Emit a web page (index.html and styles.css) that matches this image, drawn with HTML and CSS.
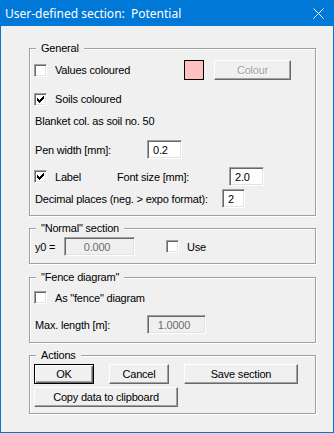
FILE: index.html
```html
<!DOCTYPE html>
<html lang="en">
<head>
    <meta charset="UTF-8">
    <title>User-defined section: Potential</title>
    <link rel="stylesheet" href="styles.css">
</head>
<body>
    <div class="window">
        <div class="titlebar">
            <span class="title">User-defined section:  Potential</span>
            <svg class="close" width="11" height="11" viewBox="0 0 11 11">
                <path d="M0.5 0.5L10.5 10.5M10.5 0.5L0.5 10.5" stroke="#fff" stroke-width="1"/>
            </svg>
        </div>

        <div class="client">
            <div class="group group-general">
                <div class="group-title">General</div>
                <div class="row row-values">
                    <label class="check w-values"><span class="box"></span>Values coloured</label>
                    <span class="swatch"></span>
                    <button class="btn btn-colour" disabled>Colour</button>
                </div>
                <div class="row row-soils">
                    <label class="check"><span class="box"><svg width="11" height="11" viewBox="0 0 11 11"><path d="M2 4h1v3h-1zM3 5h1v3h-1zM4 6h1v3h-1zM5 5h1v3h-1zM6 4h1v3h-1zM7 3h1v3h-1zM8 2h1v3h-1z"/></svg></span>Soils coloured</label>
                </div>
                <div class="row row-blanket">
                    <span class="text">Blanket col. as soil no. 50</span>
                </div>
                <div class="row row-pen">
                    <span class="text lbl-pen">Pen width [mm]:</span>
                    <input class="field w-pen" type="text" value="0.2">
                </div>
                <div class="row row-label">
                    <label class="check w-label"><span class="box"><svg width="11" height="11" viewBox="0 0 11 11"><path d="M2 4h1v3h-1zM3 5h1v3h-1zM4 6h1v3h-1zM5 5h1v3h-1zM6 4h1v3h-1zM7 3h1v3h-1zM8 2h1v3h-1z"/></svg></span>Label</label>
                    <span class="lbl-font">Font size [mm]:</span>
                    <input class="field w-font" type="text" value="2.0">
                </div>
                <div class="row row-decimal">
                    <span class="text lbl-decimal">Decimal places (neg. &gt; expo format):</span>
                    <input class="field w-dec" type="text" value="2">
                </div>
            </div>

            <div class="group group-normal">
                <div class="group-title">"Normal" section</div>
                <div class="row row-y0">
                    <span class="text lbl-y0">y0 =</span>
                    <input class="field w-y0" type="text" value="0.000" disabled>
                    <label class="check use"><span class="box"></span>Use</label>
                </div>
            </div>

            <div class="group group-fence">
                <div class="group-title">"Fence diagram"</div>
                <div class="row row-fence">
                    <label class="check"><span class="box"></span>As "fence" diagram</label>
                </div>
                <div class="row row-max">
                    <span class="text lbl-max">Max. length [m]:</span>
                    <input class="field w-max" type="text" value="1.0000" disabled>
                </div>
            </div>

            <div class="group group-actions">
                <div class="group-title">Actions</div>
                <div class="row row-buttons">
                    <button class="btn btn-default w-ok">OK</button>
                    <button class="btn w-cancel">Cancel</button>
                    <button class="btn w-save">Save section</button>
                </div>
                <div class="row row-copy">
                    <button class="btn w-copy">Copy data to clipboard</button>
                </div>
            </div>
        </div>
    </div>
</body>
</html>
```

FILE: styles.css
```css
* {
    box-sizing: border-box;
}
body {
    margin: 0;
    font-family: "Liberation Sans", Arial, sans-serif;
    font-size: 11px;
    letter-spacing: -0.2px;
    color: #000;
    background-color: #f0f0f0;
}
.window {
    width: 334px;
    height: 433px;
    border: 1px solid #0078d7;
    border-top: 0;
    background-color: #f0f0f0;
}
.titlebar {
    height: 26px;
    background-color: #0078d7;
    color: #fff;
    display: flex;
    align-items: center;
    justify-content: space-between;
    padding: 0 9px 0 4px;
}
.title {
    font-family: "Noto Sans", sans-serif;
    font-size: 12px;
    letter-spacing: 0;
    white-space: pre;
}
.close {
    display: block;
}
.client {
    padding-top: 22px;
}

/* group boxes */
.group {
    margin-left: 28px;
    width: 287px;
    border: 1px solid #a0a0a0;
    padding: 0 4px 7px;
    box-shadow: inset 1px 1px 0 #fff, 1px 1px 0 #fff;
}
.group-title {
    display: table;
    margin: -7px 0 0 2px;
    padding: 0 5px;
    height: 13px;
    line-height: 13px;
    background-color: #f0f0f0;
}
.group-normal {
    margin-top: 12px;
}
.group-fence {
    margin-top: 13px;
    padding-bottom: 8px;
}
.group-actions {
    margin-top: 12px;
    padding-bottom: 6px;
}

.row {
    display: flex;
    align-items: center;
}
.row-values { margin-top: 5px; height: 20px; }
.row-soils { margin-top: 12px; height: 14px; }
.row-blanket { margin-top: 8px; height: 14px; }
.row-pen { margin-top: 12px; height: 19px; }
.row-label { margin-top: 8px; height: 19px; }
.row-decimal { margin-top: 3px; height: 19px; }
.row-y0 { margin-top: 2px; height: 19px; }
.row-fence { margin-top: 7px; height: 13px; }
.row-max { margin-top: 11px; height: 19px; }
.row-buttons { margin-top: 2px; height: 20px; }
.row-copy { margin-top: 3px; height: 20px; }

.text {
    padding-left: 1px;
}
.lbl-pen, .lbl-max { width: 113px; }
.lbl-decimal { width: 188px; }
.lbl-y0 { width: 30px; }
.lbl-font { width: 112px; }

/* checkboxes */
.check {
    display: flex;
    align-items: center;
    gap: 8px;
}
.w-values { width: 150px; }
.w-label { width: 83px; }
.use { margin-left: 31px; }
.box {
    flex: none;
    width: 13px;
    height: 13px;
    background-color: #fff;
    border: 1px solid;
    border-color: #a0a0a0 #fff #fff #a0a0a0;
    box-shadow: inset 1px 1px 0 #696969, inset -1px -1px 0 #e3e3e3;
}
.box svg {
    display: block;
    shape-rendering: crispEdges;
}

.swatch {
    width: 20px;
    height: 20px;
    background-color: #ffc0c0;
    border: 1px solid #000;
}

/* text fields */
.field {
    height: 19px;
    margin: 0;
    padding: 0 0 0 5px;
    border: 1px solid;
    border-color: #a0a0a0 #fff #fff #a0a0a0;
    box-shadow: inset 1px 1px 0 #696969, inset -1px -1px 0 #e3e3e3;
    background-color: #fff;
    font: inherit;
    letter-spacing: inherit;
    color: #000;
    outline: none;
}
.field:disabled {
    background-color: #f0f0f0;
    color: #6d6d6d;
    text-align: center;
    padding: 0 5px 0 0;
}
.w-pen, .w-font { width: 35px; }
.w-dec { width: 23px; }
.w-y0 { width: 71px; }
.w-max { width: 59px; }

/* buttons */
.btn {
    height: 20px;
    margin: 0;
    padding: 0;
    background-color: #f0f0f0;
    border: 1px solid;
    border-color: #fff #696969 #696969 #fff;
    box-shadow: inset -1px -1px 0 #a0a0a0;
    font: inherit;
    letter-spacing: inherit;
    color: #000;
}
.btn-default {
    border-color: #000;
    box-shadow: inset 1px 1px 0 #fff, inset -1px -1px 0 #696969, inset -2px -2px 0 #a0a0a0;
}
.btn:disabled {
    color: #a0a0a0;
    text-shadow: 1px 1px 0 #fff;
}
.btn-colour {
    margin-left: 10px;
    width: 77px;
}
.w-ok { width: 60px; }
.w-cancel { width: 60px; margin-left: 15px; }
.w-save { width: 114px; margin-left: 15px; }
.w-copy { width: 144px; }
```
